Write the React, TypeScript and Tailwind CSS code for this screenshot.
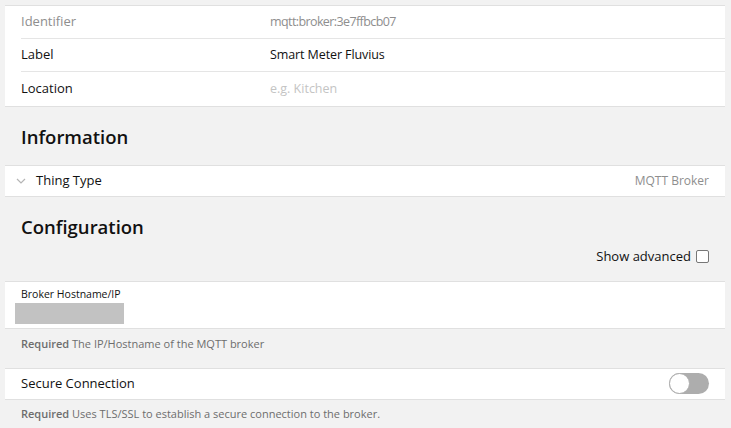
import { useState } from "react";

const font = { fontFamily: '"Open Sans", "Noto Sans", sans-serif' };

function InfoRow({ label, value, valueClass, labelClass, last }: { label: string; value: string; valueClass: string; labelClass: string; last?: boolean }) {
  return (
    <div className="pl-4">
      <div className={"flex items-center " + (last ? "h-[34px]" : "h-[33px] border-b border-[#e5e5e5]")}>
        <div className={"w-[249px] text-[13px] " + labelClass}>{label}</div>
        <div className={"text-[12.5px] " + valueClass}>{value}</div>
      </div>
    </div>
  );
}

export default function App() {
  const [advanced, setAdvanced] = useState(false);
  const [secure, setSecure] = useState(false);

  return (
    <div className="min-h-screen bg-[#f2f2f2] text-[#111] pt-[5px] pl-[5px] pr-[6px]" style={font}>
      {/* Thing details */}
      <div className="bg-white border-y border-[#e0e0e0]">
        <InfoRow label="Identifier" value="mqtt:broker:3e7ffbcb07" labelClass="text-[#8e8e8e]" valueClass="text-[#8e8e8e] tracking-[-0.6px]" />
        <InfoRow label="Label" value="Smart Meter Fluvius" labelClass="text-[#111]" valueClass="text-[#111] tracking-[-0.1px]" />
        <InfoRow label="Location" value="e.g. Kitchen" labelClass="text-[#111]" valueClass="text-[#c4c4c4]" last />
      </div>

      <h2 className="text-[18.5px] font-semibold pl-4 pt-[17px] pb-[15px] leading-[26px]">Information</h2>

      <div className="bg-white border-y border-[#e0e0e0] h-[32px] flex items-center pl-[10px] pr-4">
        <svg width="12" height="12" viewBox="0 0 12 12" className="text-[#b5b5b5]">
          <path d="M2 4l4 4 4-4" fill="none" stroke="currentColor" strokeWidth="1.2" />
        </svg>
        <span className="ml-[9px] text-[13px] text-[#111]">Thing Type</span>
        <span className="ml-auto text-[12px] text-[#8e8e8e]">MQTT Broker</span>
      </div>

      <h2 className="text-[18.5px] font-semibold pl-4 pt-[17px] leading-[26px]">Configuration</h2>

      <div className="flex justify-end items-center pr-4 pt-[7px] pb-[14px]">
        <span className="text-[13px] mr-[5px]">Show advanced</span>
        <button
          onClick={() => setAdvanced(!advanced)}
          className="w-[13px] h-[13px] border border-[#777] rounded-[2px] bg-white"
        />
      </div>

      <div className="bg-white border-y border-[#e0e0e0] h-[48px] pl-[10px] pt-[5px]">
        <div className="text-[10.5px] pl-[6px] leading-[14px]">Broker Hostname/IP</div>
        <div className="w-[109px] h-[21px] bg-[#c2c2c2] mt-[2px]" />
      </div>
      <div className="text-[11px] text-[#6d6d6d] pl-4 pt-[7px] h-[39px]">
        <span className="font-semibold">Required</span> The IP/Hostname of the MQTT broker
      </div>

      <div className="bg-white border-y border-[#e0e0e0] h-[32px] flex items-center pl-4 pr-4">
        <span className="text-[13px]">Secure Connection</span>
        <button
          onClick={() => setSecure(!secure)}
          className={"ml-auto w-[40px] h-[21px] rounded-full relative " + (secure ? "bg-[#3b82f6]" : "bg-[#adadad]")}
        >
          <span
            className={"absolute top-0 w-[21px] h-[21px] rounded-full bg-white border border-[#adadad] " + (secure ? "right-0" : "left-0")}
          />
        </button>
      </div>
      <div className="text-[11px] text-[#6d6d6d] pl-4 pt-[6px] pb-2">
        <span className="font-semibold">Required</span> Uses TLS/SSL to establish a secure connection to the broker.
      </div>
    </div>
  );
}
